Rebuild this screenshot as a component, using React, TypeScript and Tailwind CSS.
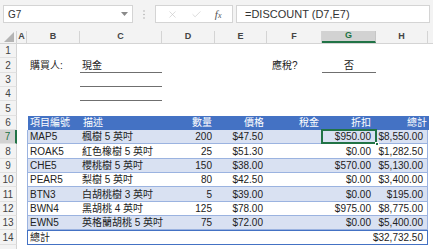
import { Check, X } from "lucide-react";

const W = [
  "w-[10px]",
  "w-[53px]",
  "w-[82px]",
  "w-[53px]",
  "w-[52px]",
  "w-[55px]",
  "w-[54px]",
  "w-[52px]",
];
const LETTERS = ["A", "B", "C", "D", "E", "F", "G", "H"];

const items = [
  ["MAP5", "楓樹 5 英吋", "200", "$47.50", "", "$950.00", "$8,550.00"],
  ["ROAK5", "紅色橡樹 5 英吋", "25", "$51.30", "", "$0.00", "$1,282.50"],
  ["CHE5", "櫻桃樹 5 英吋", "150", "$38.00", "", "$570.00", "$5,130.00"],
  ["PEAR5", "梨樹 5 英吋", "80", "$42.50", "", "$0.00", "$3,400.00"],
  ["BTN3", "白胡桃樹 3 英吋", "5", "$39.00", "", "$0.00", "$195.00"],
  ["BWN4", "黑胡桃 4 英吋", "125", "$78.00", "", "$975.00", "$8,775.00"],
  ["EWN5", "英格蘭胡桃 5 英吋", "75", "$72.00", "", "$0.00", "$5,400.00"],
];

const RowHead = ({ n, active }: { n?: number; active?: boolean }) => (
  <div
    className={
      "w-[17px] shrink-0 flex items-center justify-center text-[10px] border-b border-b-[#e1e1e1] " +
      (active
        ? "bg-[#d2d2d2] text-[#217346] border-r-2 border-r-[#217346]"
        : "bg-[#f3f3f3] text-[#444] border-r border-r-[#d4d4d4]")
    }
  >
    {n}
  </div>
);

const Row = ({
  n,
  active,
  children,
}: {
  n?: number;
  active?: boolean;
  children?: React.ReactNode;
}) => (
  <div className="flex h-[14.35px]">
    <RowHead n={n} active={active} />
    {children}
  </div>
);

const TopBar = () => (
  <div className="h-[31px] bg-[#f3f3f3] flex items-start pt-[5px] pl-[3px]">
    <div className="w-[130px] h-[18px] bg-white border border-[#d4d4d4] flex items-center justify-between pl-[4px] pr-[4px] text-[10px] text-[#333]">
      <span>G7</span>
      <svg width="7" height="4" viewBox="0 0 7 4">
        <polygon points="0,0 7,0 3.5,4" fill="#8a8a8a" />
      </svg>
    </div>
    <div className="w-[22px] h-[18px] flex items-center justify-center">
      <svg width="2" height="9" viewBox="0 0 2 9">
        <circle cx="1" cy="1" r="0.8" fill="#b0b0b0" />
        <circle cx="1" cy="4.5" r="0.8" fill="#b0b0b0" />
        <circle cx="1" cy="8" r="0.8" fill="#b0b0b0" />
      </svg>
    </div>
    <div className="w-[78px] h-[18px] bg-white border border-[#d4d4d4] flex items-center justify-around px-[4px]">
      <X size={11} strokeWidth={1.3} color="#c4c4c4" />
      <Check size={11} strokeWidth={1.3} color="#c4c4c4" />
      <span className="font-['Liberation_Serif',serif] italic text-[11px] text-[#555] leading-none">
        f<span className="text-[8px]">x</span>
      </span>
    </div>
    <div className="ml-[3px] w-[194px] h-[18px] bg-white border border-[#d4d4d4] flex items-center pl-[8px] text-[11px] text-[#333]">
      =DISCOUNT (D7,E7)
    </div>
  </div>
);

const ColHeader = () => (
  <div className="flex h-[13px] bg-[#f3f3f3] border-b border-[#d4d4d4]">
    <div className="w-[17px] shrink-0 flex items-end justify-end pr-[2px] pb-[1px] border-r border-[#d4d4d4]">
      <svg width="10" height="10" viewBox="0 0 10 10">
        <polygon points="10,0 10,10 0,10" fill="#b4b4b4" />
      </svg>
    </div>
    {LETTERS.map((l, i) =>
      l === "G" ? (
        <div
          key={l}
          className={
            W[i] +
            " shrink-0 flex items-center justify-center text-[9px] font-bold bg-[#d2d2d2] text-[#217346] border-b-2 border-[#217346] border-r border-r-[#c6c6c6]"
          }
        >
          {l}
        </div>
      ) : (
        <div
          key={l}
          className={
            W[i] +
            " shrink-0 flex items-center justify-center text-[9px] font-bold text-[#444] border-r border-[#d4d4d4]"
          }
        >
          {l}
        </div>
      ),
    )}
    <div className="flex-1" />
  </div>
);

const TableRow = ({
  cells,
  band,
  selectG,
}: {
  cells: string[];
  band: boolean;
  selectG?: boolean;
}) => (
  <div
    className={
      "flex w-[401px] h-full border-b border-x border-[#9bb3e0] text-[10px] text-[#222] " +
      (band ? "bg-[#d9e1f2]" : "bg-white")
    }
  >
    <div className="w-[52px] shrink-0 flex items-center pl-[2px] whitespace-nowrap">
      {cells[0]}
    </div>
    <div className="w-[82px] shrink-0 flex items-center pl-[2px] whitespace-nowrap">
      {cells[1]}
    </div>
    <div className="w-[53px] shrink-0 flex items-center justify-end pr-[3px]">
      {cells[2]}
    </div>
    <div className="w-[52px] shrink-0 flex items-center justify-end pr-[4px]">
      {cells[3]}
    </div>
    <div className="w-[55px] shrink-0 flex items-center justify-end pr-[3px]">
      {cells[4]}
    </div>
    <div className="w-[54px] shrink-0 flex items-center justify-end pr-[5px] relative">
      {cells[5]}
      {selectG && (
        <>
          <div className="absolute -left-[1px] -top-[1px] -right-[1px] -bottom-[1px] border-2 border-[#217346]" />
          <div className="absolute -right-[3px] -bottom-[3px] w-[4px] h-[4px] bg-[#217346] border border-white" />
        </>
      )}
    </div>
    <div className="flex-1 flex items-center justify-end pr-[4px]">{cells[6]}</div>
  </div>
);

export default function App() {
  return (
    <div className="w-[433px] h-[249px] overflow-hidden bg-white font-['Liberation_Sans','Noto_Sans_CJK_TC',sans-serif]">
      <TopBar />
      <ColHeader />
      <Row n={1} />
      <Row n={2}>
        <div className="w-[10px] shrink-0" />
        <div className="w-[53px] shrink-0 flex items-center pl-[3px] text-[10px] text-[#222] whitespace-nowrap">
          購買人:
        </div>
        <div className="w-[82px] shrink-0 flex items-center pl-[2px] text-[10px] text-[#222] border-b border-[#6f6f6f]">
          現金
        </div>
        <div className="w-[53px] shrink-0" />
        <div className="w-[52px] shrink-0" />
        <div className="w-[55px] shrink-0 flex items-center pl-[5px] text-[10px] text-[#222] whitespace-nowrap">
          應稅?
        </div>
        <div className="w-[54px] shrink-0 flex items-center justify-center text-[10px] text-[#222] border-b border-[#6f6f6f]">
          否
        </div>
      </Row>
      <Row n={3}>
        <div className="w-[63px] shrink-0" />
        <div className="w-[82px] shrink-0 border-b border-[#6f6f6f]" />
      </Row>
      <Row n={4}>
        <div className="w-[63px] shrink-0" />
        <div className="w-[82px] shrink-0 border-b border-[#6f6f6f]" />
      </Row>
      <Row n={5} />
      <Row n={6}>
        <div className="w-[11px] shrink-0" />
        <div className="flex w-[401px] h-full bg-[#4472c4] text-[10px] text-white">
          <div className="w-[52px] shrink-0 flex items-center pl-[2px] whitespace-nowrap">
            項目編號
          </div>
          <div className="w-[82px] shrink-0 flex items-center pl-[3px]">描述</div>
          <div className="w-[53px] shrink-0 flex items-center justify-end pr-[3px]">
            數量
          </div>
          <div className="w-[52px] shrink-0 flex items-center justify-end pr-[3px]">
            價格
          </div>
          <div className="w-[55px] shrink-0 flex items-center justify-end pr-[3px]">
            稅金
          </div>
          <div className="w-[54px] shrink-0 flex items-center justify-end pr-[5px]">
            折扣
          </div>
          <div className="flex-1 flex items-center justify-end pr-[2px]">總計</div>
        </div>
      </Row>
      {items.map((it, i) => (
        <Row key={it[0]} n={7 + i} active={i === 0}>
          <div className="w-[10px] shrink-0" />
          <TableRow cells={it} band={i % 2 === 0} selectG={i === 0} />
        </Row>
      ))}
      <Row n={14}>
        <div className="w-[10px] shrink-0" />
        <div className="flex w-[401px] h-full border-t border-[#4472c4] border-b border-x border-[#9bb3e0] bg-white text-[10px] text-[#222]">
          <div className="flex-1 flex items-center pl-[2px]">總計</div>
          <div className="flex items-center justify-end pr-[4px]">$32,732.50</div>
        </div>
      </Row>
      <Row />
    </div>
  );
}
